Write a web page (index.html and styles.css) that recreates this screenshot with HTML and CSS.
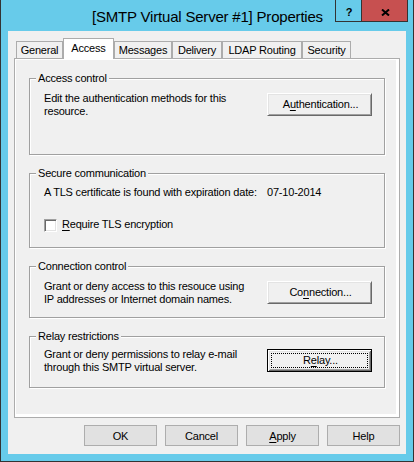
FILE: index.html
```html
<!DOCTYPE html>
<html>
<head>
    <title>[SMTP Virtual Server #1] Properties</title>
    <link rel="stylesheet" href="styles.css">
</head>
<body>
    <div class="window">
        <div class="titlebar">
            <div class="title">[SMTP Virtual Server #1] Properties</div>
            <div class="caption-buttons">
                <div class="cap-btn help">?</div>
                <div class="cap-btn close">
                    <svg width="9" height="7" viewBox="0 0 9 7">
                        <path d="M1 0.5 L8 6.5 M8 0.5 L1 6.5" stroke="#000" stroke-width="2" fill="none"/>
                    </svg>
                </div>
            </div>
        </div>

        <div class="client">
            <div class="tabs">
                <div class="tab tab-general">General</div>
                <div class="tab tab-access selected">Access</div>
                <div class="tab tab-messages">Messages</div>
                <div class="tab tab-delivery">Delivery</div>
                <div class="tab tab-ldap">LDAP Routing</div>
                <div class="tab tab-security">Security</div>
            </div>

            <div class="tab-body">
                <div class="page">
                    <div class="group group-access">
                        <div class="group-title">Access control</div>
                        <div class="group-row">
                            <div class="group-text">Edit the authentication methods for this<br>resource.</div>
                            <div class="button">A<u>u</u>thentication...</div>
                        </div>
                    </div>

                    <div class="group group-secure">
                        <div class="group-title">Secure communication</div>
                        <div class="group-row tls-row">
                            <div class="group-text">A TLS certificate is found with expiration date:</div>
                            <div class="tls-date">07-10-2014</div>
                        </div>
                        <div class="check-row">
                            <div class="checkbox"></div>
                            <div class="check-label"><u>R</u>equire TLS encryption</div>
                        </div>
                    </div>

                    <div class="group group-small">
                        <div class="group-title">Connection control</div>
                        <div class="group-row">
                            <div class="group-text">Grant or deny access to this resouce using<br>IP addresses or Internet domain names.</div>
                            <div class="button">Co<u>n</u>nection...</div>
                        </div>
                    </div>

                    <div class="group group-small">
                        <div class="group-title">Relay restrictions</div>
                        <div class="group-row relay-row">
                            <div class="group-text">Grant or deny permissions to relay e-mail<br>through this SMTP virtual server.</div>
                            <div class="button default"><span>R<u>e</u>lay...</span></div>
                        </div>
                    </div>
                </div>
            </div>

            <div class="actions">
                <div class="push">OK</div>
                <div class="push">Cancel</div>
                <div class="push"><u>A</u>pply</div>
                <div class="push">Help</div>
            </div>
        </div>
    </div>
</body>
</html>
```

FILE: styles.css
```css
body {
    margin: 0;
    background-color: #ffffff;
    font-family: "Liberation Sans", Arial, sans-serif;
    font-size: 11px;
    letter-spacing: -0.2px;
    color: #000000;
}
u {
    text-decoration-thickness: 1px;
    text-underline-offset: 2px;
}
.window {
    width: 414px;
    height: 462px;
    box-sizing: border-box;
    background-color: #67cbea;
    border: 1px solid #333333;
    border-top: none;
    padding: 0 7px 7px 7px;
}
.titlebar {
    position: relative;
    height: 31px;
    margin: 0 -7px;
    box-sizing: border-box;
    padding-top: 8px;
}
.title {
    text-align: center;
    font-size: 15px;
    line-height: 17px;
    letter-spacing: -0.2px;
    padding-left: 1px;
}
.caption-buttons {
    position: absolute;
    top: 0;
    right: 5px;
    display: flex;
    border: 1px solid #333333;
    border-top: none;
}
.cap-btn {
    height: 21px;
    display: flex;
    align-items: center;
    justify-content: center;
}
.help {
    width: 26px;
    border-right: 1px solid #333333;
    font-weight: bold;
    font-size: 11px;
    letter-spacing: 0;
    padding-top: 2px;
    box-sizing: border-box;
    padding-left: 1px;
}
.close {
    width: 45px;
    background-color: #c75050;
}
.close svg {
    margin-top: 3px;
    margin-left: 1px;
}
.client {
    background-color: #f0f0f0;
    height: 423px;
}
.tabs {
    display: flex;
    align-items: flex-end;
    padding: 7px 0 0 8px;
    height: 20px;
}
.tab {
    box-sizing: border-box;
    height: 17px;
    border: 1px solid #acacac;
    border-bottom: none;
    background-color: #f0f0f0;
    text-align: center;
    line-height: 13px;
    padding-top: 2px;
}
.tab.selected {
    position: relative;
    z-index: 1;
    height: 21px;
    margin-bottom: -1px;
    background-color: #ffffff;
    padding-top: 3px;
}
.tab-general { width: 47px; }
.tab-access { width: 51px; }
.tab-messages { width: 58px; }
.tab-delivery { width: 50px; }
.tab-ldap { width: 80px; }
.tab-security { width: 49px; }
.tab-body {
    box-sizing: border-box;
    height: 360px;
    margin: 0 6px;
    border: 1px solid #acacac;
    background-color: #ffffff;
    padding: 1px 3px 3px 1px;
}
.page {
    height: 100%;
    background-color: #f0f0f0;
    padding: 18px 0 0 13px;
    box-sizing: border-box;
}
.group {
    box-sizing: border-box;
    width: 356px;
    border: 1px solid #a0a0a0;
    box-shadow: inset 1px 1px #ffffff, 1px 1px #ffffff;
    padding: 0 12px 0 14px;
}
.group + .group {
    margin-top: 18px;
}
.group-access { height: 77px; }
.group-secure { height: 75px; }
.group-small { height: 52px; }
.group-title {
    display: table;
    margin: -7px 0 0 -8px;
    padding: 0 2px;
    background-color: #f0f0f0;
    line-height: 13px;
}
.group-row {
    display: flex;
    align-items: flex-start;
    margin-top: 7px;
    line-height: 13px;
}
.tls-row {
    margin-top: 6px;
}
.relay-row {
    margin-top: 5px;
}
.group-text {
    flex: 1;
}
.tls-date {
    width: 105px;
}
.button {
    box-sizing: border-box;
    width: 105px;
    height: 23px;
    margin-top: 1px;
    display: flex;
    align-items: center;
    justify-content: center;
    background-color: #f0f0f0;
    border: 1px solid;
    border-color: #ffffff #696969 #696969 #ffffff;
    box-shadow: inset 1px 1px #e3e3e3, inset -1px -1px #a0a0a0;
    padding-left: 2px;
}
.button.default {
    border: 1px solid #000000;
    box-shadow: inset 1px 1px #ffffff, inset -1px -1px #696969, inset 2px 2px #e3e3e3, inset -2px -2px #a0a0a0;
    outline: 1px dotted #000000;
    outline-offset: -5px;
}
.check-row {
    display: flex;
    align-items: flex-start;
    margin-top: 19px;
    line-height: 13px;
}
.checkbox {
    box-sizing: border-box;
    width: 13px;
    height: 13px;
    margin-top: 1px;
    margin-right: 5px;
    background-color: #ffffff;
    border: 1px solid;
    border-color: #a0a0a0 #ffffff #ffffff #a0a0a0;
    box-shadow: inset 1px 1px #696969, inset -1px -1px #e3e3e3;
}
.actions {
    display: flex;
    justify-content: flex-end;
    gap: 8px;
    padding: 7px 6px 0 0;
}
.push {
    box-sizing: border-box;
    width: 73px;
    height: 21px;
    display: flex;
    align-items: center;
    justify-content: center;
    background-color: #e1e1e1;
    border: 1px solid #adadad;
    line-height: 13px;
    padding-top: 1px;
}
```
